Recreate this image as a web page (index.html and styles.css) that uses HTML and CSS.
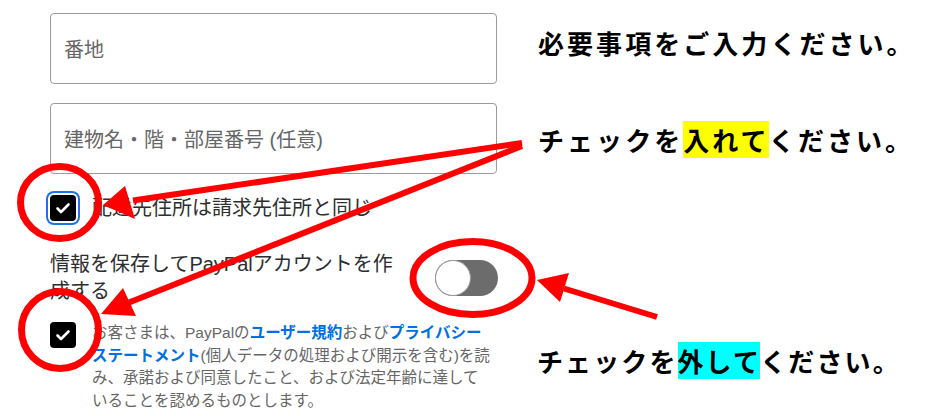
FILE: index.html
```html
<!DOCTYPE html>
<html lang="ja">
<head>
  <meta charset="UTF-8">
  <meta name="viewport" content="width=device-width, initial-scale=1.0">
  <title>配送先情報</title>
  <link rel="stylesheet" href="styles.css">
</head>
<body>

  <div class="page">
    <div class="form">
      <div class="field">番地</div>
      <div class="field">建物名・階・部屋番号 (任意)</div>

      <div class="check-row">
        <span class="checkbox focused">
          <svg viewBox="0 0 26 26" width="26" height="26"><path d="M7.5 13.5 L11 17 L18.5 9.5" /></svg>
        </span>
        <span class="check-label">配送先住所は請求先住所と同じ</span>
      </div>

      <div class="toggle-row">
        <span class="toggle-label">情報を保存してPayPalアカウントを作成する</span>
        <span class="toggle"><span class="knob"></span></span>
      </div>

      <div class="legal-row">
        <span class="checkbox">
          <svg viewBox="0 0 26 26" width="26" height="26"><path d="M7.5 13.5 L11 17 L18.5 9.5" /></svg>
        </span>
        <p class="legal">お客さまは、PayPalの<a href="#">ユーザー規約</a>および<a href="#">プライバシー</a><br><a href="#">ステートメント</a>(個人データの処理および開示を含む)を読<br>み、承諾および同意したこと、および法定年齢に達して<br>いることを認めるものとします。</p>
      </div>
    </div>

    <div class="notes">
      <p class="note first">必要事項をご入力ください。</p>
      <p class="note second">チェックを<span class="mark yellow">入れて</span>ください。</p>
      <p class="note third">チェックを<span class="mark cyan">外して</span>ください。</p>
    </div>
  </div>

  <!-- 赤い注釈 -->
  <svg class="marks" viewBox="0 0 936 416" width="936" height="416">
    <g fill="none" stroke="#ff0000" stroke-width="7">
      <ellipse cx="59.5" cy="202.5" rx="39" ry="36" />
      <ellipse cx="60" cy="330" rx="38.5" ry="38.5" />
      <ellipse cx="472.5" cy="278" rx="59.5" ry="36.5" />
    </g>
    <g stroke="#ff0000" stroke-width="6">
      <line x1="522" y1="143" x2="133" y2="200.5" />
      <line x1="522" y1="146" x2="129" y2="302.5" />
      <line x1="657" y1="317" x2="564" y2="288.5" />
    </g>
    <g fill="#ff0000">
      <polygon points="103,205 125,186 135,219" />
      <polygon points="101,314 123,288 136,316" />
      <polygon points="537,280 569,273 560,302" />
    </g>
  </svg>

</body>
</html>
```

FILE: styles.css
```css
body {
  margin: 0;
  background-color: #fff;
  font-family: "Liberation Sans", "Noto Sans CJK JP", sans-serif;
}

.page {
  display: flex;
}

.form {
  width: 447px;
  margin-left: 50px;
  padding-top: 13px;
}

.field {
  box-sizing: border-box;
  height: 71px;
  border: 1px solid #9a9a9a;
  border-radius: 4px;
  padding: 0 13px;
  display: flex;
  align-items: center;
  font-size: 20px;
  color: #666;
  margin-bottom: 19px;
}

.field + .field {
  margin-bottom: 0;
}

.check-row {
  display: flex;
  align-items: center;
  margin-top: 21px;
}

.checkbox {
  width: 26px;
  height: 26px;
  flex: none;
  background-color: #000;
  border-radius: 4px;
  display: flex;
}

.checkbox path {
  fill: none;
  stroke: #fff;
  stroke-width: 2.6;
  stroke-linecap: round;
  stroke-linejoin: round;
}

.checkbox.focused {
  box-shadow: 0 0 0 2px #fff, 0 0 0 4px #1a73e8;
}

.check-label {
  margin-left: 16px;
  font-size: 20px;
  line-height: 26px;
  color: #2c2e2f;
}

.toggle-row {
  display: flex;
  align-items: center;
  margin-top: 30px;
}

.toggle-label {
  width: 355px;
  font-size: 20px;
  line-height: 27px;
  color: #2c2e2f;
}

.toggle {
  margin-left: auto;
  margin-right: -1px;
  width: 63px;
  height: 36px;
  border-radius: 18px;
  background-color: #6c6c6c;
  display: flex;
}

.knob {
  box-sizing: border-box;
  width: 36px;
  height: 36px;
  border-radius: 50%;
  background-color: #fff;
  border: 1px solid #9a9a9a;
}

.legal-row {
  display: flex;
  align-items: flex-start;
  margin-top: 17px;
}

.legal {
  width: 405px;
  margin: 0 0 0 16px;
  font-size: 15.5px;
  line-height: 22.5px;
  color: #666;
  white-space: nowrap;
}

.legal a {
  color: #0070e0;
  font-weight: bold;
  text-decoration: none;
}

.notes {
  margin-left: 41px;
}

.note {
  margin: 0;
  font-family: "Noto Sans CJK JP", sans-serif;
  font-weight: bold;
  font-size: 26px;
  line-height: 40px;
  letter-spacing: 3.05px;
  color: #000;
  white-space: nowrap;
}

.note.first {
  margin-top: 23px;
}

.note.second {
  margin-top: 57px;
}

.note.third {
  margin-top: 181px;
  margin-left: -1px;
  letter-spacing: 2.1px;
}

.mark.yellow {
  background-color: #ffff00;
}

.mark.cyan {
  background-color: #00ffff;
}

.marks {
  position: absolute;
  left: 0;
  top: 0;
  pointer-events: none;
}
```
